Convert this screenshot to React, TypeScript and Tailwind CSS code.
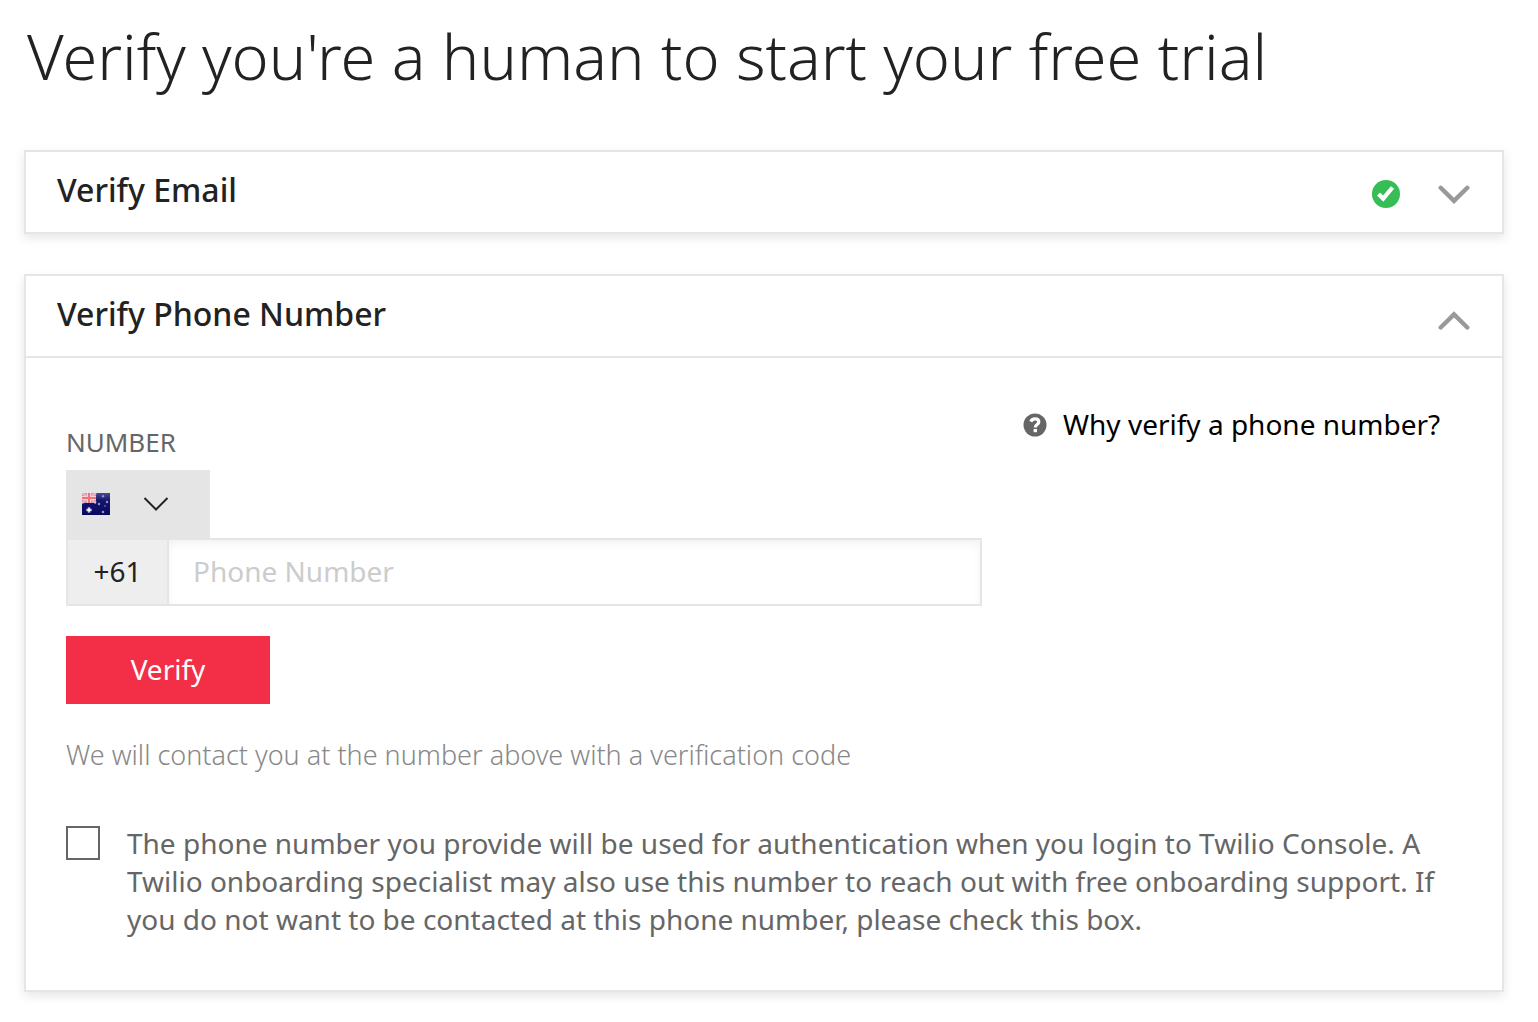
import { useState } from 'react';

interface ChevronProps {
  up?: boolean;
}

function Chevron({ up = false }: ChevronProps) {
  return (
    <svg width="32" height="20" viewBox="0 0 32 20" fill="none" stroke="#999999" strokeWidth="4.4" strokeLinecap="round" aria-hidden="true">
      <path d={up ? 'M2.7 17.5 L16 4.4 L29.3 17.5' : 'M2.7 3.8 L16 16.9 L29.3 3.8'} />
    </svg>
  );
}

function CheckBadge() {
  return (
    <svg width="28" height="28" viewBox="0 0 28 28" aria-hidden="true">
      <circle cx="14" cy="14" r="14" fill="#36bd56" />
      <path d="M6.5 14 L11.2 18.6 L20.5 7.5" fill="none" stroke="#ffffff" strokeWidth="4.2" />
    </svg>
  );
}

function HelpBadge() {
  return (
    <svg width="24" height="24" viewBox="0 0 24 24" aria-hidden="true">
      <circle cx="12" cy="12" r="11.5" fill="#666666" />
      <path d="M7.8 8.6 C8.7 6.4 10.2 5.9 12 5.9 C14.3 5.9 15.8 7.1 15.8 8.9 C15.8 11.6 12.3 11.3 12.3 14.4" fill="none" stroke="#ffffff" strokeWidth="3.2" />
      <rect x="10.6" y="16" width="3.4" height="3.2" fill="#ffffff" />
    </svg>
  );
}

function AustraliaFlag() {
  return (
    <svg width="28" height="22" viewBox="0 0 28 22" aria-hidden="true">
      <defs>
        <linearGradient id="flag-blue" x1="0" y1="0" x2="0" y2="1">
          <stop offset="0" stopColor="#4a4a90" />
          <stop offset="0.35" stopColor="#15156e" />
          <stop offset="1" stopColor="#08085c" />
        </linearGradient>
      </defs>
      <rect width="28" height="22" fill="url(#flag-blue)" />
      <rect width="14" height="10" fill="#a79fc8" />
      <path d="M0 0 L14 10 M14 0 L0 10" stroke="#f0b0bc" strokeWidth="2.4" />
      <path d="M7 0 V10 M0 5 H14" stroke="#f8ced4" strokeWidth="4" />
      <path d="M7 0 V10 M0 5 H14" stroke="#f0707a" strokeWidth="2" />
      <path d="M7 14 V20 M4 17 H10" stroke="#7f83c0" strokeWidth="2.4" />
      <circle cx="7" cy="17" r="1.8" fill="#ffffff" />
      <g fill="#9094c8">
        <circle cx="21" cy="3.2" r="1.2" />
        <circle cx="17" cy="11" r="1.2" />
        <circle cx="25" cy="9" r="1.2" />
        <circle cx="23" cy="13" r="0.8" />
        <circle cx="21" cy="19" r="1.3" />
      </g>
    </svg>
  );
}

const CARD = 'border-2 border-[#e5e5e5] bg-white shadow-[0_4px_10px_rgba(0,0,0,0.10)]';

export default function App() {
  const [phone, setPhone] = useState('');
  const [optOut, setOptOut] = useState(false);

  return (
    <main className="min-h-screen bg-white pt-5 pr-[34px] pb-[30px] pl-6 font-['Noto_Sans','Open_Sans',sans-serif] text-[#222222]">
      <h1 className="mb-[58px] pl-[3px] text-[63px] leading-[72px] font-light whitespace-nowrap">
        Verify you're a human to start your free trial
      </h1>

      <section className={CARD}>
        <button type="button" className="flex h-20 w-full items-center pr-8 pl-[31px] text-left">
          <h2 className="flex-1 pb-1 text-[32px] leading-10 font-medium">Verify Email</h2>
          <span className="mt-1 flex items-center gap-[38px]">
            <CheckBadge />
            <Chevron />
          </span>
        </button>
      </section>

      <section className={`mt-10 ${CARD}`}>
        <button type="button" className="flex h-[82px] w-full items-center border-b-2 border-[#e5e5e5] pr-8 pl-[31px] text-left">
          <h2 className="flex-1 pb-1 text-[32px] leading-10 font-medium">Verify Phone Number</h2>
          <span className="mt-2">
            <Chevron up />
          </span>
        </button>

        <form className="px-10 pt-12 pb-[52px]" onSubmit={(e) => e.preventDefault()}>
          <div className="flex">
            <div className="flex-1 pt-[18px]">
              <label htmlFor="phone" className="block text-[26px] leading-9 text-[#666666]">
                NUMBER
              </label>
              <div className="mt-[10px] flex h-[68px] w-36 items-center gap-[33px] bg-[#e5e5e5] px-4">
                <AustraliaFlag />
                <button type="button" aria-label="Select country">
                  <svg width="26" height="16" viewBox="0 0 26 16" fill="none" stroke="#222222" strokeWidth="2" aria-hidden="true">
                    <path d="M1.5 2 L13 13.5 L24.5 2" />
                  </svg>
                </button>
              </div>
              <div className="flex h-[68px] border-2 border-[#e5e5e5]">
                <span className="flex w-[101px] items-center justify-center border-r-2 border-[#e5e5e5] bg-[#eeeeee] pb-0.5 text-[28px]">
                  +61
                </span>
                <input
                  id="phone"
                  type="tel"
                  value={phone}
                  onChange={(e) => setPhone(e.target.value)}
                  placeholder="Phone Number"
                  className="min-w-0 flex-1 px-6 pb-0.5 text-[28px] shadow-[inset_0_4px_8px_rgba(0,0,0,0.05)] outline-none placeholder:text-[#cccccc]"
                />
              </div>
            </div>
            <div className="w-[480px] pl-[41px]">
              <a href="#why" className="flex items-center gap-4 text-[28px] leading-9 whitespace-nowrap text-black">
                <HelpBadge />
                <span className="pb-0.5">Why verify a phone number?</span>
              </a>
            </div>
          </div>

          <button type="submit" className="mt-[30px] block h-[68px] w-[204px] bg-[#f22f46] pb-0.5 text-[28px] text-white">
            Verify
          </button>
          <p className="mt-8 text-[27px] leading-[38px] font-light text-[#888888]">
            We will contact you at the number above with a verification code
          </p>

          <div className="mt-[50px] flex items-start gap-[27px]">
            <input
              id="opt-out"
              type="checkbox"
              checked={optOut}
              onChange={(e) => setOptOut(e.target.checked)}
              className="mt-0.5 size-[34px] shrink-0 appearance-none border-2 border-[#666666] bg-white checked:bg-[#666666]"
            />
            <label htmlFor="opt-out" className="text-[28px] leading-[38px] text-[#666666]">
              The phone number you provide will be used for authentication when you login to Twilio Console. A
              Twilio onboarding specialist may also use this number to reach out with free onboarding support. If
              you do not want to be contacted at this phone number, please check this box.
            </label>
          </div>
        </form>
      </section>
    </main>
  );
}
